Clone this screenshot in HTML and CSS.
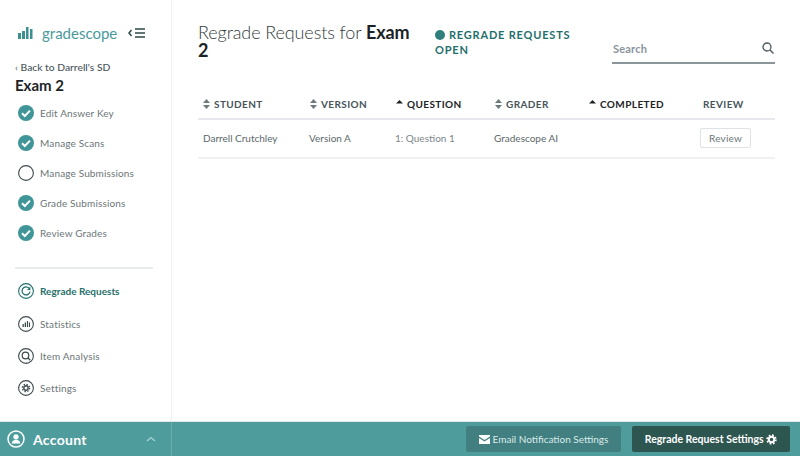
FILE: index.html
```html
<!DOCTYPE html>
<html lang="en">
<head>
    <meta charset="UTF-8">
    <title>Regrade Requests</title>
    <link rel="stylesheet" href="styles.css">
</head>
<body>
    <div class="page">
        <aside class="sidebar">
            <div class="brand">
                <svg class="brand-logo" width="15" height="14" viewBox="0 0 15 14"><path d="M0 7h3v6H0zM4 5h3v8H4zM8 1h2.500v12H8zM12 3h2.500v10H12z" fill="#3d8f91"/></svg>
                <span class="brand-name">gradescope</span>
                <svg class="brand-toggle" width="20" height="10" viewBox="0 0 20 10"><path d="M3.500 2L1 5l2.500 3" fill="none" stroke="#2f4a4a" stroke-width="1.500"/><path d="M7 1h10M7 5h10M7 9h10" stroke="#2f4a4a" stroke-width="1.500"/></svg>
            </div>
            <a class="back-link"><span class="back-caret">&lsaquo;</span> Back to Darrell's SD</a>
            <div class="course-title">Exam 2</div>
            <ul class="steps">
                <li class="step"><svg class="step-icon" viewBox="0 0 16 16"><circle cx="8" cy="8" r="8" fill="#3f9597"/><path d="M4 8.200l2.800 2.800L12 5.600" fill="none" stroke="#fff" stroke-width="2"/></svg>Edit Answer Key</li>
                <li class="step"><svg class="step-icon" viewBox="0 0 16 16"><circle cx="8" cy="8" r="8" fill="#3f9597"/><path d="M4 8.200l2.800 2.800L12 5.600" fill="none" stroke="#fff" stroke-width="2"/></svg>Manage Scans</li>
                <li class="step"><svg class="step-icon" viewBox="0 0 16 16"><circle cx="8" cy="8" r="7.400" fill="none" stroke="#3c4a4d" stroke-width="1.100"/></svg>Manage Submissions</li>
                <li class="step"><svg class="step-icon" viewBox="0 0 16 16"><circle cx="8" cy="8" r="8" fill="#3f9597"/><path d="M4 8.200l2.800 2.800L12 5.600" fill="none" stroke="#fff" stroke-width="2"/></svg>Grade Submissions</li>
                <li class="step"><svg class="step-icon" viewBox="0 0 16 16"><circle cx="8" cy="8" r="8" fill="#3f9597"/><path d="M4 8.200l2.800 2.800L12 5.600" fill="none" stroke="#fff" stroke-width="2"/></svg>Review Grades</li>
            </ul>
            <ul class="nav">
                <li class="nav-item nav-item-active"><svg class="step-icon" viewBox="0 0 16 16"><circle cx="8" cy="8" r="7.400" fill="none" stroke="#1f6f6c" stroke-width="1.100"/><path d="M11 5.200A4 4 0 1 0 12 8.500" fill="none" stroke="#1f6f6c" stroke-width="1.200"/><path d="M12.400 3.600v3.400H9z" fill="#1f6f6c"/></svg>Regrade Requests</li>
                <li class="nav-item"><svg class="step-icon" viewBox="0 0 16 16"><circle cx="8" cy="8" r="7.400" fill="none" stroke="#3c4a4d" stroke-width="1.100"/><path d="M4.500 8h1.300v3H4.500zM6.700 6.500H8V11H6.700zM8.900 5h1.200v6H8.900zM11 6.500h1V11h-1z" fill="#3c4a4d"/></svg>Statistics</li>
                <li class="nav-item"><svg class="step-icon" viewBox="0 0 16 16"><circle cx="8" cy="8" r="7.400" fill="none" stroke="#3c4a4d" stroke-width="1.100"/><circle cx="7.500" cy="7.500" r="3.300" fill="none" stroke="#3c4a4d" stroke-width="1.200"/><path d="M10 10l2.300 2.300" stroke="#3c4a4d" stroke-width="1.300"/></svg>Item Analysis</li>
                <li class="nav-item"><svg class="step-icon" viewBox="0 0 16 16"><circle cx="8" cy="8" r="7.400" fill="none" stroke="#3c4a4d" stroke-width="1.100"/><circle cx="8" cy="8" r="2.200" fill="none" stroke="#3c4a4d" stroke-width="1.400"/><circle cx="8" cy="8" r="3.700" fill="none" stroke="#3c4a4d" stroke-width="1.200" stroke-dasharray="1.450 1.450"/></svg>Settings</li>
            </ul>
        </aside>
        <main class="content">
            <header class="content-head">
                <h1 class="page-title">Regrade Requests for <strong>Exam</strong> <strong>2</strong></h1>
                <div class="status"><span class="status-dot"></span>Regrade Requests Open</div>
                <div class="search">
                    <span class="search-label">Search</span>
                    <svg width="12" height="12" viewBox="0 0 12 12"><circle cx="5" cy="5" r="4" fill="none" stroke="#4a5a60" stroke-width="1.300"/><path d="M8 8l3.500 3.500" stroke="#4a5a60" stroke-width="1.400"/></svg>
                </div>
            </header>
            <table class="requests">
                <thead>
                    <tr>
                        <th class="col-student"><svg class="sort" viewBox="0 0 7 10"><path d="M3.500 0L7 4H0zM3.500 10L0 6h7z" fill="#6c7a7e"/></svg>Student</th>
                        <th class="col-version"><svg class="sort" viewBox="0 0 7 10"><path d="M3.500 0L7 4H0zM3.500 10L0 6h7z" fill="#6c7a7e"/></svg>Version</th>
                        <th class="col-question th-sorted"><svg class="sort" viewBox="0 0 7 10"><path d="M3.500 1L7 4.500H0z" fill="#1c2326"/></svg>Question</th>
                        <th class="col-grader"><svg class="sort" viewBox="0 0 7 10"><path d="M3.500 0L7 4H0zM3.500 10L0 6h7z" fill="#6c7a7e"/></svg>Grader</th>
                        <th class="col-completed th-sorted"><svg class="sort" viewBox="0 0 7 10"><path d="M3.500 1L7 4.500H0z" fill="#1c2326"/></svg>Completed</th>
                        <th class="col-review">Review</th>
                    </tr>
                </thead>
                <tbody>
                    <tr>
                        <td>Darrell Crutchley</td>
                        <td>Version A</td>
                        <td class="cell-light">1: Question 1</td>
                        <td>Gradescope AI</td>
                        <td></td>
                        <td class="cell-review"><button class="review-btn">Review</button></td>
                    </tr>
                </tbody>
            </table>
        </main>
    </div>
    <footer class="bottom-bar">
        <div class="account">
            <svg width="18" height="18" viewBox="0 0 18 18"><circle cx="9" cy="9" r="8" fill="none" stroke="#fff" stroke-width="1.500"/><circle cx="9" cy="6.800" r="2.600" fill="#fff"/><path d="M4.800 13.500c0-5 8.400-5 8.400 0z" fill="#fff"/></svg>
            <span class="account-name">Account</span>
            <svg class="account-caret" width="10" height="6" viewBox="0 0 10 6"><path d="M1 5l4-3.500L9 5" fill="none" stroke="#a9d2d2" stroke-width="1.200"/></svg>
        </div>
        <div class="actions">
            <button class="action action-light"><svg class="action-icon" width="11" height="9" viewBox="0 0 11 9"><path d="M0 0h11v1.500L5.500 5 0 1.500zM0 3l5.500 3.500L11 3v6H0z" fill="#fff"/></svg>Email Notification Settings</button>
            <button class="action action-dark">Regrade Request Settings <svg class="action-gear" width="11" height="11" viewBox="0 0 11 11"><circle cx="5.500" cy="5.500" r="2.700" fill="none" stroke="#fff" stroke-width="2"/><circle cx="5.500" cy="5.500" r="4.400" fill="none" stroke="#fff" stroke-width="1.600" stroke-dasharray="1.730 1.730"/></svg></button>
        </div>
    </footer>
</body>
</html>
```

FILE: styles.css
```css
* {
    margin: 0;
    padding: 0;
    box-sizing: border-box;
}

body {
    font-family: 'Lato', 'Open Sans', sans-serif;
    background: white;
    color: #333;
    width: 800px;
    height: 456px;
    overflow: hidden;
    display: flex;
    flex-direction: column;
}

ul {
    list-style: none;
}

.page {
    display: flex;
    height: 421px;
}

.sidebar {
    width: 172px;
    flex-shrink: 0;
    padding: 26px 18px 0 15px;
    border-right: 1px solid #eef0f1;
}

.brand {
    display: flex;
    align-items: center;
    height: 14px;
    padding-left: 3px;
}

.brand-name {
    margin-left: 9px;
    font-size: 15px;
    color: #4a9a9c;
}

.brand-toggle {
    margin-left: 11px;
}

.back-link {
    display: block;
    margin-top: 21px;
    font-size: 10.300px;
    font-weight: 500;
    color: #4a565a;
}

.back-caret {
    color: #6c7a7e;
}

.course-title {
    margin-top: 3px;
    font-size: 15px;
    font-weight: 700;
    color: #1c2326;
}

.steps {
    margin-top: 4px;
    padding-bottom: 19px;
    border-bottom: 2px solid #e8ebec;
}

.step {
    display: flex;
    align-items: center;
    height: 30px;
    padding-left: 3px;
    font-size: 10px;
    letter-spacing: 0.15px;
    color: #6c7678;
}

.step-icon {
    width: 16px;
    height: 16px;
    margin-right: 6px;
    flex-shrink: 0;
}

.nav {
    margin-top: 6px;
}

.nav-item {
    display: flex;
    align-items: center;
    height: 32.400px;
    padding-left: 3px;
    font-size: 10px;
    letter-spacing: 0.15px;
    color: #6c7678;
}

.nav-item-active {
    color: #1f6f6c;
    font-weight: 700;
    letter-spacing: 0;
}

.content {
    flex: 1;
    padding: 22px 25px 0 26px;
}

.content-head {
    display: flex;
    align-items: flex-start;
    height: 75px;
}

.page-title {
    width: 237px;
    margin-top: 2px;
    padding-right: 15px;
    font-size: 18px;
    line-height: 17.500px;
    font-weight: 300;
    letter-spacing: -0.1px;
    color: #333b3e;
}

.page-title strong {
    font-weight: 700;
    color: #1c2326;
}

.status {
    width: 153px;
    padding-top: 5px;
    font-size: 11px;
    line-height: 15px;
    font-weight: 700;
    letter-spacing: 0.8px;
    text-transform: uppercase;
    color: #1f6f6c;
}

.status-dot {
    display: inline-block;
    width: 10px;
    height: 10px;
    margin-right: 4px;
    border-radius: 50%;
    background: #2f7f7c;
    vertical-align: -1px;
}

.search {
    display: flex;
    align-items: center;
    justify-content: space-between;
    width: 163px;
    height: 32px;
    margin-left: auto;
    margin-top: 10px;
    padding: 2px 1px 0;
    border-bottom: 2px solid #8b969b;
}

.search-label {
    font-size: 11px;
    font-weight: 700;
    letter-spacing: 0.2px;
    color: #8a949c;
}

.requests {
    width: 577px;
    border-collapse: collapse;
    table-layout: fixed;
    margin-top: -8px;
}

.requests th {
    height: 30px;
    padding-left: 6px;
    border-bottom: 2px solid #e6e8ee;
    text-align: left;
    font-size: 10px;
    font-weight: 700;
    letter-spacing: 0.4px;
    text-transform: uppercase;
    color: #47555a;
}

.requests th.th-sorted {
    color: #1c2326;
}

.requests th.col-student {
    padding-left: 5px;
}

.requests th.col-review {
    padding-left: 8px;
}

.col-student { width: 106px; }
.col-version { width: 86px; }
.col-question { width: 99px; }
.col-grader { width: 94px; }
.col-completed { width: 112px; }

.sort {
    width: 7px;
    height: 10px;
    margin-right: 4px;
    vertical-align: -1px;
}

.requests td {
    height: 39px;
    padding-left: 5px;
    padding-bottom: 1px;
    border-bottom: 2px solid #f0f1f4;
    font-size: 10px;
    color: #5c686c;
}

.requests td.cell-light {
    color: #7c878b;
}

.review-btn {
    width: 51px;
    height: 20px;
    background: white;
    border: 1px solid #dfe2e6;
    border-radius: 2px;
    font-family: inherit;
    font-size: 10px;
    letter-spacing: 0.2px;
    color: #6c7678;
}

.bottom-bar {
    display: flex;
    height: 35px;
    background: #4f9c9d;
    border-top: 1px solid #e2e6e6;
}

.account {
    display: flex;
    align-items: center;
    width: 172px;
    padding-left: 7px;
    border-right: 1px solid #6aabab;
}

.account-name {
    margin-left: 8px;
    font-size: 14px;
    font-weight: 700;
    letter-spacing: 0.3px;
    color: white;
}

.account-caret {
    margin-left: auto;
    margin-right: 15px;
}

.actions {
    flex: 1;
    display: flex;
    align-items: center;
    justify-content: flex-end;
    gap: 11px;
    padding-right: 10px;
}

.action {
    height: 26px;
    border: none;
    border-radius: 2px;
    font-family: inherit;
    font-size: 10.500px;
    color: white;
}

.action-light {
    width: 155px;
    background: #417f80;
    font-size: 10px;
    color: #dcebeb;
}

.action-icon {
    margin-right: 3px;
    vertical-align: -1px;
}

.action-gear {
    vertical-align: -2px;
}

.action-dark {
    width: 158px;
    background: #2e5650;
    font-weight: 700;
}
```
